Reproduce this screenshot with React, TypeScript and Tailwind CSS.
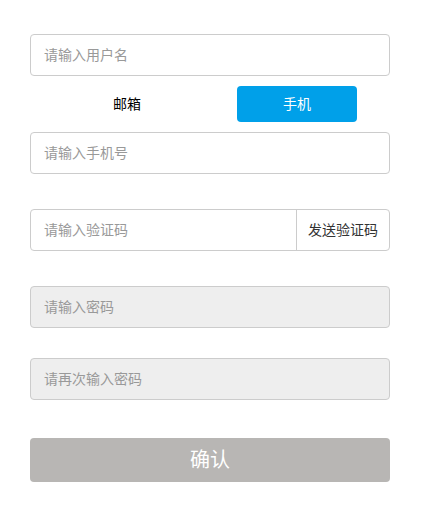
import React, { useState } from "react";

const font = { fontFamily: '"Liberation Sans", "Noto Sans CJK SC", sans-serif' };

const App = () => {
  const [tab, setTab] = useState("phone");

  return (
    <div className="min-h-screen bg-white" style={font}>
      <div className="w-[360px] ml-[30px] pt-[34px] flex flex-col">
        <input
          className="h-[42px] w-full rounded border border-[#cccccc] px-[13px] text-[14px] text-[#333] placeholder:text-[#999] outline-none"
          placeholder="请输入用户名"
        />

        <div className="mt-[10px] flex pl-[37px] gap-[50px]">
          <button
            onClick={() => setTab("email")}
            className={
              tab === "email"
                ? "h-9 w-[120px] rounded bg-[#00a0e9] text-[14px] text-white"
                : "h-9 w-[120px] rounded text-[14px] text-black"
            }
          >
            邮箱
          </button>
          <button
            onClick={() => setTab("phone")}
            className={
              tab === "phone"
                ? "h-9 w-[120px] rounded bg-[#00a0e9] text-[14px] text-white"
                : "h-9 w-[120px] rounded text-[14px] text-black"
            }
          >
            手机
          </button>
        </div>

        <input
          className="mt-[10px] h-[42px] w-full rounded border border-[#cccccc] px-[13px] text-[14px] text-[#333] placeholder:text-[#999] outline-none"
          placeholder={tab === "phone" ? "请输入手机号" : "请输入邮箱"}
        />

        <div className="mt-[35px] flex h-[42px] w-full rounded border border-[#cccccc]">
          <input
            className="flex-1 min-w-0 px-[13px] text-[14px] text-[#333] placeholder:text-[#999] outline-none rounded-l"
            placeholder="请输入验证码"
          />
          <button className="w-[93px] border-l border-[#cccccc] text-[14px] text-[#333]">
            发送验证码
          </button>
        </div>

        <input
          disabled
          type="password"
          className="mt-[35px] h-[42px] w-full rounded border border-[#cccccc] bg-[#eeeeee] px-[13px] text-[14px] placeholder:text-[#999] outline-none"
          placeholder="请输入密码"
        />

        <input
          disabled
          type="password"
          className="mt-[30px] h-[42px] w-full rounded border border-[#cccccc] bg-[#eeeeee] px-[13px] text-[14px] placeholder:text-[#999] outline-none"
          placeholder="请再次输入密码"
        />

        <button className="mt-[38px] h-[44px] w-full rounded bg-[#b8b6b4] text-[20px] text-white">
          确认
        </button>
      </div>
    </div>
  );
};

export default App;
